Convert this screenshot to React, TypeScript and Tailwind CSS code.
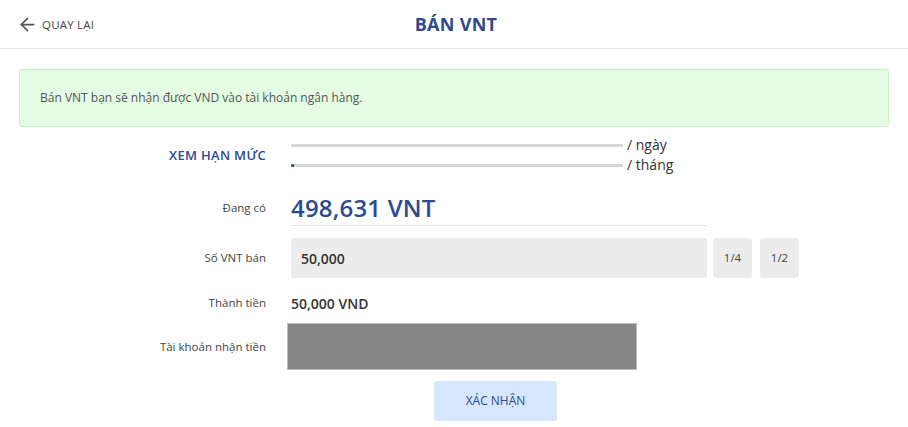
import { ArrowLeft } from "lucide-react";

const font = { fontFamily: '"Open Sans", "Noto Sans", sans-serif' };

function Label({ children, className = "" }: { children: React.ReactNode; className?: string }) {
  return (
    <div className={`w-[247px] shrink-0 text-right text-[11.5px] text-[#444] ${className}`}>
      {children}
    </div>
  );
}

export default function App() {
  return (
    <div className="w-[908px] h-[427px] bg-white overflow-hidden" style={font}>
      {/* header */}
      <div className="relative h-[49px] flex items-center justify-center border-b border-[#e3e3e3]">
        <button className="absolute left-[17px] top-[14px] flex items-center gap-[4px] text-[#444]">
          <ArrowLeft size={21} strokeWidth={2} className="text-[#555]" />
          <span className="text-[11.5px] font-medium tracking-[0.2px]">QUAY LẠI</span>
        </button>
        <h1 className="ml-[4px] text-[18px] font-bold text-[#2c4a8f] tracking-[0.3px]">BÁN VNT</h1>
      </div>

      <div className="px-[19px] pt-[20px]">
        <div className="h-[58px] flex items-center px-[20px] bg-[#e3fce3] border border-[#c9f0c9] rounded-[3px] text-[12px] text-[#555]">
          Bán VNT bạn sẽ nhận được VND vào tài khoản ngân hàng.
        </div>

        <div className="mt-[9px] flex flex-col">
          {/* limits */}
          <div className="flex items-center gap-[25px] h-[40px]">
            <Label className="!text-[13px] font-semibold !text-[#2c4a8f] tracking-[0.3px]">XEM HẠN MỨC</Label>
            <div className="flex flex-col gap-[4px] mb-[2px]">
              <div className="flex items-center gap-[4px]">
                <div className="w-[332px] h-[3px] rounded-full bg-[#d6d6d6]" />
                <span className="text-[14px] leading-[16px] text-[#333]">/ ngày</span>
              </div>
              <div className="flex items-center gap-[4px]">
                <div className="w-[332px] h-[3px] rounded-full bg-[#d6d6d6] overflow-hidden">
                  <div className="w-[3px] h-full bg-[#2c4a8f]" />
                </div>
                <span className="text-[14px] leading-[16px] text-[#333]">/ tháng</span>
              </div>
            </div>
          </div>

          {/* balance */}
          <div className="mt-[14px] flex items-center gap-[25px] h-[36px]">
            <Label>Đang có</Label>
            <div className="w-[416px] h-full flex items-center border-b border-[#e3e3e3]">
              <span className="text-[24px] font-semibold text-[#2c4a8f] leading-none tracking-[0.2px]">498,631 VNT</span>
            </div>
          </div>

          {/* amount */}
          <div className="mt-[12px] flex items-center gap-[25px]">
            <Label>Số VNT bán</Label>
            <div className="flex items-center gap-[6px]">
              <div className="w-[416px] h-[40px] flex items-center px-[10px] bg-[#ececec] rounded-[3px] text-[14px] font-semibold text-[#333]">
                50,000
              </div>
              <button className="w-[39px] h-[40px] bg-[#ececec] rounded-[3px] text-[11.5px] text-[#444]">1/4</button>
              <button className="ml-[2px] w-[39px] h-[40px] bg-[#ececec] rounded-[3px] text-[11.5px] text-[#444]">1/2</button>
            </div>
          </div>

          {/* total */}
          <div className="mt-[15px] flex items-center gap-[25px] h-[20px]">
            <Label>Thành tiền</Label>
            <span className="text-[14px] font-semibold text-[#333]">50,000 VND</span>
          </div>

          {/* account */}
          <div className="mt-[10px] flex items-center gap-[21px]">
            <Label>Tài khoản nhận tiền</Label>
            <div className="w-[350px] h-[47px] bg-[#868686] border border-[#bdbdbd]" />
          </div>

          {/* submit */}
          <div className="mt-[11px] flex">
            <button className="ml-[415px] w-[123px] h-[40px] bg-[#d7e5fd] rounded-[3px] text-[12px] text-[#2c4a8f]">
              XÁC NHẬN
            </button>
          </div>
        </div>
      </div>
    </div>
  );
}
